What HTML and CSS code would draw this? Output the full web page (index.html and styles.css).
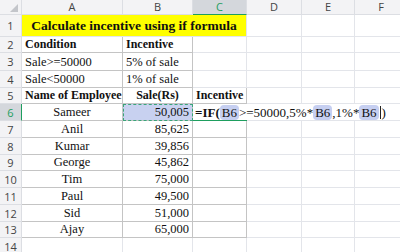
FILE: index.html
```html
<!DOCTYPE html>
<html lang="en">
<head>
    <meta charset="UTF-8">
    <title>Calculate incentive using if formula</title>
    <link rel="stylesheet" href="styles.css">
</head>
<body>
    <table class="sheet">
        <colgroup>
            <col class="c-head">
            <col class="c-a">
            <col class="c-b">
            <col class="c-c">
            <col class="c-d">
            <col class="c-e">
            <col class="c-f">
        </colgroup>
        <tr class="col-heads">
            <th class="corner"><span class="corner-tri"></span></th>
            <th>A</th>
            <th>B</th>
            <th class="active">C</th>
            <th>D</th>
            <th>E</th>
            <th>F</th>
        </tr>
        <tr class="title-row">
            <th class="row-num">1</th>
            <td colspan="3" class="title">Calculate incentive using if formula</td>
            <td></td><td></td><td></td>
        </tr>
        <tr class="short">
            <th class="row-num">2</th>
            <td class="box bold">Condition</td>
            <td class="box bold">Incentive</td>
            <td></td><td></td><td></td><td></td>
        </tr>
        <tr class="tall">
            <th class="row-num">3</th>
            <td class="box">Sale&gt;=50000</td>
            <td class="box">5% of sale</td>
            <td></td><td></td><td></td><td></td>
        </tr>
        <tr>
            <th class="row-num">4</th>
            <td class="box">Sale&lt;50000</td>
            <td class="box">1% of sale</td>
            <td></td><td></td><td></td><td></td>
        </tr>
        <tr class="short">
            <th class="row-num">5</th>
            <td class="box bold center">Name of Employee</td>
            <td class="box bold center">Sale(Rs)</td>
            <td class="box bold">Incentive</td>
            <td></td><td></td><td></td>
        </tr>
        <tr>
            <th class="row-num active">6</th>
            <td class="box center">Sameer</td>
            <td class="box num ref">50,005</td>
            <td class="box editing">
                <div class="formula"><b>=IF(</b><span class="hl">B6</span>&gt;=50000,5%*<span class="hl">B6</span>,1%*<span class="hl">B6</span><span class="caret"></span>)</div>
            </td>
            <td class="spill"></td><td class="spill"></td><td></td>
        </tr>
        <tr>
            <th class="row-num">7</th>
            <td class="box center">Anil</td>
            <td class="box num">85,625</td>
            <td class="box"></td>
            <td></td><td></td><td></td>
        </tr>
        <tr>
            <th class="row-num">8</th>
            <td class="box center">Kumar</td>
            <td class="box num">39,856</td>
            <td class="box"></td>
            <td></td><td></td><td></td>
        </tr>
        <tr class="short">
            <th class="row-num">9</th>
            <td class="box center">George</td>
            <td class="box num">45,862</td>
            <td class="box"></td>
            <td></td><td></td><td></td>
        </tr>
        <tr>
            <th class="row-num">10</th>
            <td class="box center">Tim</td>
            <td class="box num">75,000</td>
            <td class="box"></td>
            <td></td><td></td><td></td>
        </tr>
        <tr>
            <th class="row-num">11</th>
            <td class="box center">Paul</td>
            <td class="box num">49,500</td>
            <td class="box"></td>
            <td></td><td></td><td></td>
        </tr>
        <tr>
            <th class="row-num">12</th>
            <td class="box center">Sid</td>
            <td class="box num">51,000</td>
            <td class="box"></td>
            <td></td><td></td><td></td>
        </tr>
        <tr class="short">
            <th class="row-num">13</th>
            <td class="box center">Ajay</td>
            <td class="box num">65,000</td>
            <td class="box"></td>
            <td></td><td></td><td></td>
        </tr>
        <tr>
            <th class="row-num">14</th>
            <td></td><td></td><td></td><td></td><td></td><td></td>
        </tr>
    </table>
</body>
</html>
```

FILE: styles.css
```css
* {
    margin: 0;
    padding: 0;
    box-sizing: border-box;
}

body {
    background: #fff;
    overflow: hidden;
    width: 400px;
    height: 252px;
}

.sheet {
    table-layout: fixed;
    border-collapse: separate;
    border-spacing: 0;
    width: 408px;
    font-family: "Liberation Serif", "Times New Roman", serif;
    font-size: 12.5px;
    color: #111;
}

.c-head { width: 22px; }
.c-a { width: 101px; }
.c-b { width: 70px; }
.c-c { width: 54px; }
.c-d { width: 55px; }
.c-e { width: 53px; }
.c-f { width: 53px; }

tr {
    height: 17px;
}

tr.short {
    height: 16px;
}

tr.tall {
    height: 18px;
}

td {
    padding: 0 3px;
    border-right: 1px solid #e3e5ea;
    border-bottom: 1px solid #e3e5ea;
    vertical-align: bottom;
    line-height: 15px;
    white-space: nowrap;
    overflow: visible;
}

th {
    font-family: "Open Sans", "DejaVu Sans", sans-serif;
    font-weight: normal;
    font-size: 11px;
    color: #444;
    background: #f3f3f5;
    border-right: 1px solid #dcdee3;
    border-bottom: 1px solid #dcdee3;
}

.col-heads {
    height: 15px;
}

.col-heads th {
    line-height: 14px;
}

.col-heads th.active {
    background: #d4d7dc;
    color: #1e9e5e;
    border-bottom: 1px solid #1e9e5e;
}

.corner {
    position: relative;
}

.corner-tri {
    position: absolute;
    right: 3px;
    bottom: 2px;
    width: 0;
    height: 0;
    border-left: 8px solid transparent;
    border-bottom: 8px solid #c3c5ca;
}

.row-num {
    text-align: center;
    line-height: 15px;
}

.row-num.active {
    background: #d4d7dc;
    color: #1e9e5e;
    border-right: 1px solid #1e9e5e;
}

.title-row {
    height: 22px;
}

.title {
    background: #ffff00;
    font-weight: bold;
    font-size: 13.5px;
    text-align: center;
    line-height: 20px;
}

.box {
    border-right-color: #c4c4c4;
    border-bottom-color: #c4c4c4;
}

.bold {
    font-weight: bold;
    font-size: 12px;
}

.center {
    text-align: center;
}

.num {
    text-align: right;
}

.ref {
    background: #c8d1f0;
    outline: 1px dashed #3aa57a;
    outline-offset: -1px;
}

.editing {
    border-right: none;
    border-bottom: 1px solid #1e9e5e;
    padding-left: 2px;
}

.spill {
    border-right: none;
}

.formula {
    font-size: 13px;
    line-height: 15px;
    width: 0;
    overflow: visible;
}

.hl {
    background: #c6cff1;
    border-radius: 4px;
    padding: 0 2px;
}

.caret {
    display: inline-block;
    width: 1px;
    height: 13px;
    background: #222;
    vertical-align: -2px;
    margin: 0 1px;
}
```
